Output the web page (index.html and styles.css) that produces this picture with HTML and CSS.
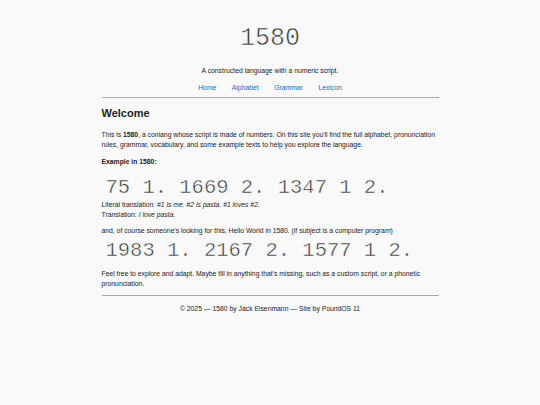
FILE: index.html
```html
<!DOCTYPE html>
<html lang="en">
<head>
<meta charset="utf-8">
<title>1580</title>
<link rel="stylesheet" href="styles.css">
</head>
<body>
<div class="page">
  <header class="site-header">
    <h1 class="logo">1580</h1>
    <p class="tagline">A constructed language with a numeric script.</p>
    <nav class="nav">
      <a href="#">Home</a>
      <a href="#">Alphabet</a>
      <a href="#">Grammar</a>
      <a href="#">Lexicon</a>
    </nav>
  </header>
  <main class="content">
    <h2 class="title">Welcome</h2>
    <p class="intro">This is <strong>1580</strong>, a conlang whose script is made of numbers. On this site you'll find the full alphabet, pronunciation rules, grammar, vocabulary, and some example texts to help you explore the language.</p>
    <p class="label"><strong>Example in 1580:</strong></p>
    <div class="script">75 1. 1669 2. 1347 1 2.</div>
    <p class="line">Literal translation: <em>#1 is me. #2 is pasta. #1 loves #2.</em></p>
    <p class="line">Translation: <em>I love pasta.</em></p>
    <p class="line gap">and, of course someone's looking for this, Hello World in 1580. (if subject is a computer program)</p>
    <div class="script script2">1983 1. 2167 2. 1577 1 2.</div>
    <p class="outro">Feel free to explore and adapt. Maybe fill in anything that's missing, such as a custom script, or a phonetic pronunciation.</p>
  </main>
  <footer class="site-footer">© 2025 — 1580 by Jack Eisenmann — Site by PoundOS 11</footer>
</div>
</body>
</html>
```
FILE: styles.css
```css
html, body {
  margin: 0;
  padding: 0;
  background: #f9f9f9;
}
body {
  font-family: "Liberation Sans", Arial, sans-serif;
  font-size: 6.8px;
  line-height: 10px;
  color: #222;
}
.page {
  width: 337px;
  margin: 0 auto;
}
.site-header {
  text-align: center;
  padding-top: 24px;
  padding-bottom: 4px;
  border-bottom: 1px solid #aaa;
}
.logo {
  margin: 0;
  font-family: "Liberation Mono", "Courier New", monospace;
  font-weight: normal;
  font-size: 25px;
  line-height: 30px;
  color: #333;
  -webkit-text-stroke: 0.6px #f9f9f9;
}
.tagline {
  margin: 12px 0 0;
}
.nav {
  margin-top: 7px;
  display: flex;
  justify-content: center;
  gap: 15.5px;
}
.nav a {
  color: #1c6cb4;
  text-decoration: none;
}
.content {
  padding-top: 8px;
  padding-bottom: 6px;
  border-bottom: 1px solid #aaa;
}
.title {
  margin: 0;
  font-size: 11px;
  line-height: 14px;
  font-weight: bold;
}
.intro {
  margin: 10px 0 0;
}
.label {
  margin: 7px 0 0;
}
.script {
  margin: 9px 0 0 4px;
  font-family: "Liberation Mono", "Courier New", monospace;
  font-size: 20.5px;
  line-height: 24px;
  color: #333;
  -webkit-text-stroke: 0.5px #f9f9f9;
}
.script2 {
  margin-top: 3px;
}
.line {
  margin: 0;
}
.line.gap {
  margin-top: 6px;
}
.outro {
  margin: 6px 0 0;
}
.site-footer {
  text-align: center;
  padding-top: 8px;
}
```
